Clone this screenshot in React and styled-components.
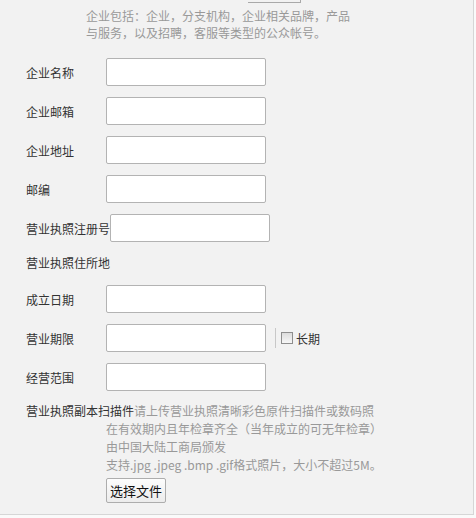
import React from "react";
import styled, { createGlobalStyle } from "styled-components";

const GlobalStyle = createGlobalStyle`
  body {
    margin: 0;
    background: #fafafa;
    font-family: "Microsoft YaHei", "Noto Sans CJK SC", "Noto Sans", sans-serif;
  }
`;

const Page = styled.div`
  width: 473px;
  height: 514px;
  background: #f2f2f2;
  border-right: 1px solid #d6d6d6;
  border-bottom: 1px solid #d6d6d6;
  overflow: hidden;
  font-size: 12px;
  color: #333;
`;

const TopStub = styled.div`
  margin-left: 248px;
  width: 52px;
  height: 2px;
  border-bottom: 1px solid #a9a9a9;
  border-right: 1px solid #a9a9a9;
`;

const Hint = styled.p`
  margin: 4px 0 0 86px;
  color: #999;
  line-height: 17px;
`;

const Form = styled.div`
  margin-top: 17px;
  padding-left: 26px;
`;

const Row = styled.div`
  display: flex;
  align-items: center;
  height: 28px;
  margin-bottom: 11px;
`;

const TextRow = styled.div`
  height: 20px;
  line-height: 20px;
  margin: 3px 0 12px;
`;

const Label = styled.span`
  min-width: 80px;
  white-space: nowrap;
`;

const Input = styled.input`
  box-sizing: border-box;
  width: 160px;
  height: 28px;
  border: 1px solid #b3b3b3;
  border-radius: 2px;
  background: #fff;
  outline: none;
`;

const Divider = styled.span`
  width: 1px;
  height: 20px;
  background: #c8c8c8;
  margin: 0 5px 0 9px;
`;

const Check = styled.span`
  box-sizing: border-box;
  width: 12px;
  height: 12px;
  border: 1px solid #8e8e8e;
  background: linear-gradient(#dcdcdc, #f7f7f7);
  margin-right: 3px;
`;

const Upload = styled.div`
  margin-top: 8px;
  line-height: 18px;
`;

const Note = styled.span`
  color: #999;
`;

const NoteLines = styled.div`
  margin-left: 80px;
  color: #999;
`;

const FileButton = styled.button`
  display: block;
  margin: 4px 0 0 80px;
  width: 60px;
  height: 25px;
  padding: 0;
  font-family: inherit;
  font-size: 13px;
  color: #111;
  background: linear-gradient(#fdfdfd, #ececec);
  border: 1px solid #adadad;
  border-radius: 2px;
`;

const fields = ["企业名称", "企业邮箱", "企业地址", "邮编", "营业执照注册号"];

export default function App() {
  return (
    <Page>
      <GlobalStyle />
      <TopStub />
      <Hint>
        企业包括：企业，分支机构，企业相关品牌，产品
        <br />
        与服务，以及招聘，客服等类型的公众帐号。
      </Hint>
      <Form>
        {fields.map((f) => (
          <Row key={f}>
            <Label>{f}</Label>
            <Input />
          </Row>
        ))}
        <TextRow>营业执照住所地</TextRow>
        <Row>
          <Label>成立日期</Label>
          <Input />
        </Row>
        <Row>
          <Label>营业期限</Label>
          <Input />
          <Divider />
          <Check />
          <span>长期</span>
        </Row>
        <Row>
          <Label>经营范围</Label>
          <Input />
        </Row>
        <Upload>
          <div>
            营业执照副本扫描件<Note>请上传营业执照清晰彩色原件扫描件或数码照</Note>
          </div>
          <NoteLines>
            <div>在有效期内且年检章齐全（当年成立的可无年检章）</div>
            <div>由中国大陆工商局颁发</div>
            <div>支持.jpg .jpeg .bmp .gif格式照片，大小不超过5M。</div>
          </NoteLines>
          <FileButton>选择文件</FileButton>
        </Upload>
      </Form>
    </Page>
  );
}
